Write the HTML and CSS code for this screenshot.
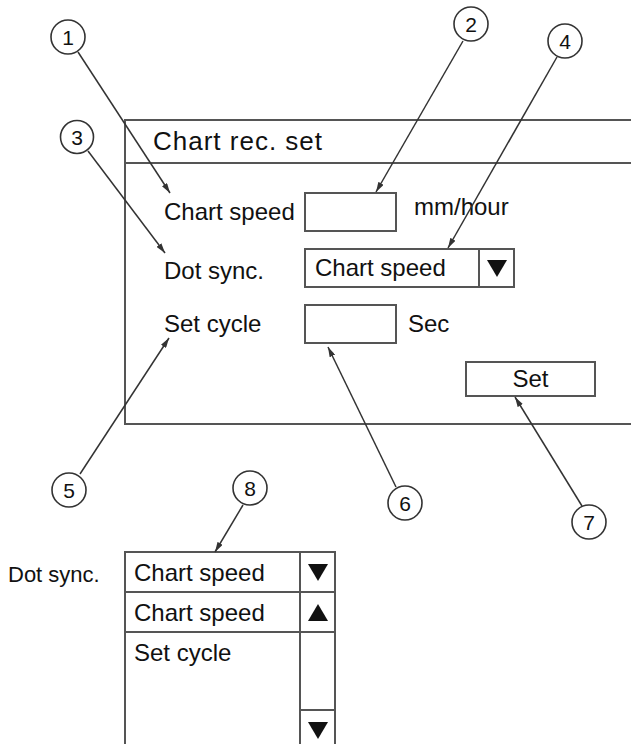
FILE: index.html
```html
<!DOCTYPE html>
<html>
<head>
    <meta charset="utf-8">
    <meta name="viewport" content="width=device-width, initial-scale=1.0">
    <link rel="stylesheet" href="styles.css">
</head>
<body>
<div class="canvas">
    <div class="dialog">
        <div class="dialogTitle">Chart rec. set</div>
        <div class="dialogBody">
            <div class="row">
                <span class="label">Chart speed</span>
                <span class="field"></span>
                <span class="unit unitHigh">mm/hour</span>
            </div>
            <div class="row">
                <span class="label labelLow">Dot sync.</span>
                <div class="combo">
                    <span class="comboText">Chart speed</span>
                    <span class="comboBtn"><svg class="tri" viewBox="0 0 20 17"><polygon points="0,0 20,0 10,17"/></svg></span>
                </div>
            </div>
            <div class="row">
                <span class="label">Set cycle</span>
                <span class="field"></span>
                <span class="unit unitSec">Sec</span>
            </div>
            <div class="setBtn">Set</div>
        </div>
    </div>

    <div class="listDemo">
        <span class="listLabel">Dot sync.</span>
        <div class="openCombo">
            <div class="openRow">
                <span class="openText">Chart speed</span>
                <span class="openBtn"><svg class="tri" viewBox="0 0 20 17"><polygon points="0,0 20,0 10,17"/></svg></span>
            </div>
            <div class="openList">
                <div class="items">
                    <div class="item itemSel">Chart speed</div>
                    <div class="item">Set cycle</div>
                </div>
                <div class="scroll">
                    <div class="scrollBtn scrollUp"><svg class="tri" viewBox="0 0 20 17"><polygon points="0,17 20,17 10,0"/></svg></div>
                    <div class="scrollTrack"></div>
                    <div class="scrollBtn scrollDown"><svg class="tri" viewBox="0 0 20 17"><polygon points="0,0 20,0 10,17"/></svg></div>
                </div>
            </div>
        </div>
    </div>

    <!-- numbered callouts over the drawing -->
    <svg class="callouts" width="631" height="744" viewBox="0 0 631 744">
        <defs>
            <marker id="tip" markerWidth="10" markerHeight="6" refX="10" refY="3" orient="auto" markerUnits="userSpaceOnUse">
                <path d="M0,0 L10,3 L0,6 z" fill="#333"/>
            </marker>
        </defs>
        <g class="leaders">
            <line x1="78" y1="52" x2="170" y2="193"/>
            <line x1="463" y1="41" x2="376" y2="192"/>
            <line x1="88" y1="151" x2="165" y2="253"/>
            <line x1="557" y1="57" x2="448" y2="248"/>
            <line x1="80" y1="474" x2="169" y2="338"/>
            <line x1="396" y1="487" x2="328" y2="347"/>
            <line x1="582" y1="506" x2="515" y2="397"/>
            <line x1="243" y1="505" x2="215" y2="552"/>
        </g>
        <g class="badges">
            <circle cx="68" cy="37" r="17"/><text x="68" y="44.5">1</text>
            <circle cx="471" cy="24" r="17"/><text x="471" y="31.5">2</text>
            <circle cx="77" cy="137" r="16.5"/><text x="77" y="144.5">3</text>
            <circle cx="565" cy="41" r="17"/><text x="565" y="48.5">4</text>
            <circle cx="69" cy="490" r="17"/><text x="69" y="497.5">5</text>
            <circle cx="405" cy="503" r="17"/><text x="405" y="510.5">6</text>
            <circle cx="589" cy="522" r="17"/><text x="589" y="529.5">7</text>
            <circle cx="250" cy="488" r="17"/><text x="250" y="495.5">8</text>
        </g>
    </svg>
</div>
</body>
</html>
```

FILE: styles.css
```css
body{
    margin: 0; padding: 0; background: #fff;
    font-family: "Liberation Sans", Arial, sans-serif; color: #111;
}
.canvas{
    position: relative; width: 631px; height: 744px; overflow: hidden;
    padding-top: 119px; box-sizing: border-box;
}
.dialog{
    margin-left: 124px; width: 540px;
    border: 2px solid #555; box-sizing: border-box;
}
.dialogTitle{
    height: 41px; line-height: 40px; padding-left: 27px;
    font-size: 26px; letter-spacing: 1px;
    border-bottom: 2px solid #555;
}
.dialogBody{
    display: flex; flex-direction: column; gap: 16px;
    padding: 28px 0 26px 38px;
    font-size: 24px;
}
.row{
    display: flex; align-items: center; height: 40px;
}
.label{ width: 140px; }
.labelLow{ padding-top: 6px; }
.field{
    width: 93px; height: 40px;
    border: 2px solid #555; box-sizing: border-box;
}
.unit{ margin-left: 17px; }
.unitHigh{ align-self: flex-start; line-height: 30px; }
.unitSec{ margin-left: 11px; }
.combo{
    display: flex; width: 211px; height: 40px;
    border: 2px solid #555; box-sizing: border-box;
}
.comboText{ flex: 1; padding-left: 9px; line-height: 36px; }
.comboBtn, .openBtn{
    width: 33px; border-left: 2px solid #555;
    display: flex; align-items: center; justify-content: center;
}
.tri{ width: 20px; height: 17px; fill: #111; }
.setBtn{
    margin: 1px 0 0 301px; width: 131px; height: 36px;
    border: 2px solid #555; box-sizing: border-box;
    text-align: center; line-height: 32px;
}

.listDemo{
    display: flex; margin-top: 126px;
}
.listLabel{
    width: 124px; padding: 4px 0 0 8px; box-sizing: border-box;
    font-size: 22px; line-height: 40px;
}
.openCombo{
    width: 212px; border: 2px solid #555; border-bottom: none; box-sizing: border-box;
    font-size: 24px;
}
.openRow{
    display: flex; height: 38px; border-bottom: 2px solid #555;
}
.openText{ flex: 1; padding-left: 8px; line-height: 40px; }
.openList{ display: flex; height: 220px; }
.items{ flex: 1; }
.item{ height: 38px; line-height: 40px; padding-left: 8px; }
.itemSel{ border-bottom: 2px solid #555; }
.scroll{
    width: 33px; border-left: 2px solid #555;
    display: flex; flex-direction: column;
}
.scrollBtn{
    height: 38px; display: flex; align-items: center; justify-content: center;
}
.scrollUp{ border-bottom: 2px solid #555; }
.scrollTrack{ height: 76px; }
.scrollDown{ border-top: 2px solid #555; }

.callouts{
    position: absolute; left: 0; top: 0; pointer-events: none;
}
.callouts line{ stroke: #333; stroke-width: 1.5; marker-end: url(#tip); }
.callouts circle{ fill: #fff; stroke: #333; stroke-width: 1.6; }
.callouts text{
    font-family: "Liberation Sans", Arial, sans-serif; font-size: 21px;
    text-anchor: middle; fill: #111;
}
```
